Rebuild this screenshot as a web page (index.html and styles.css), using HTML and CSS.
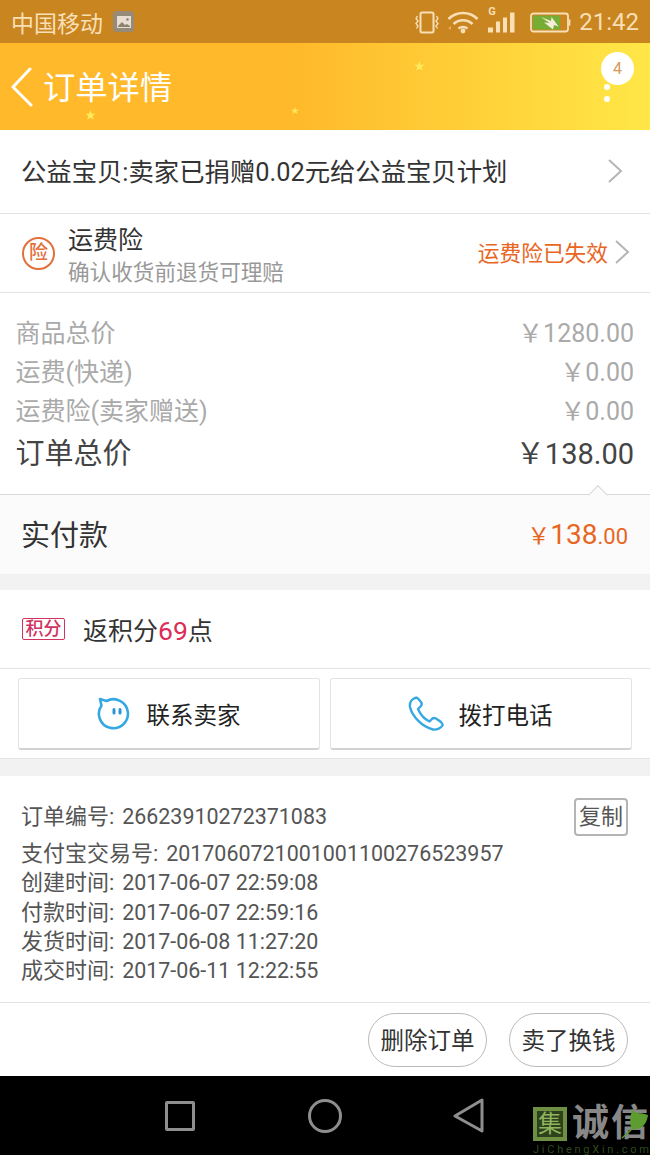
FILE: index.html
```html
<html>

<head>
	<title>订单详情</title>
	<meta name="viewport" content="width=device-width, initial-scale=1.0">
	<link rel="stylesheet" href="styles.css">
</head>

<body>
	<div class="statusbar">
		<div class="status-left">
			<span>中国移动</span>
			<span class="pic-note">
				<svg width="16" height="14" viewBox="0 0 16 14"><path d="M1 1h14v12H1z" fill="#e8dfd2"/><path d="M2 11l4-4 3 3 2-1 3 2v1H2z" fill="#8d8373"/><circle cx="11.500" cy="4.500" r="1.300" fill="#8d8373"/></svg>
			</span>
		</div>
		<div class="status-right">
			<svg class="vib" width="24" height="24" viewBox="0 0 24 24" fill="none" stroke="#f8dfb5" stroke-width="1.800"><rect x="5.500" y="2.500" width="13" height="20" rx="1.500" stroke-width="2"/><path d="M2.500 6L1 8.500 3 11l-2 2.500L3 16l-1.500 2.500M21.500 6L23 8.500 21 11l2 2.500-2 2.500 1.500 2.500" stroke-width="1.400"/></svg>
			<svg class="wifi" width="32" height="24" viewBox="0 0 32 24" fill="none" stroke="#f8dfb5" stroke-width="2.600"><path d="M1.500 9c8-8 21-8 29 0M6.500 14c5.500-5 13.500-5 19 0M11.500 18.500c2.500-2 6.500-2 9 0"/><circle cx="16" cy="21" r="2.400" fill="#f8dfb5" stroke="none"/><path d="M1 18l3-2v4z" fill="#e8a85a" stroke="none"/></svg>
			<span class="signal">
				<span class="g">G</span>
				<svg width="27" height="24" viewBox="0 0 27 24" fill="#f8dfb5"><path d="M0 17.500h5v5H0zM8 11.500h4v11H8zM15 7.500h4v15h-4zM22 2.500h4.500v20H22z"/></svg>
			</span>
			<svg class="battery" width="41" height="22" viewBox="0 0 41 22"><rect x="1" y="2.500" width="37" height="18" rx="2.500" fill="none" stroke="#f8dfb5" stroke-width="1.800"/><path d="M3 4.500h27v14H3z" fill="#76ad35"/><path d="M39.500 8.500v6" stroke="#f8dfb5" stroke-width="1.800"/><path d="M11 6l10 4 .5-4 7 9.500-4.500-1.500-1 4.500-9-7 5.500.5z" fill="#f6edd8"/></svg>
			<span class="clock">21:42</span>
		</div>
	</div>

	<div class="header">
		<svg class="back" width="24" height="40" viewBox="0 0 24 40" fill="none" stroke="#fff" stroke-width="3" stroke-linecap="round" stroke-linejoin="round"><path d="M20 2L3 20l18 18"/></svg>
		<h1>订单详情</h1>
		<span class="star star1">★</span>
		<span class="star star2">★</span>
		<span class="star star3">★</span>
		<div class="more">
			<span class="badge">4</span>
			<span class="dot dot-top"></span>
			<span class="dot"></span>
		</div>
	</div>

	<div class="row donate">
		<span>公益宝贝:卖家已捐赠0.02元给公益宝贝计划</span>
		<svg class="chev" width="16" height="26" viewBox="0 0 16 26" fill="none" stroke="#b5b5b5" stroke-width="2"><path d="M2 2l12 11L2 24"/></svg>
	</div>

	<div class="row insure">
		<div class="insure-left">
			<span class="insure-icon">险</span>
			<div class="insure-text">
				<div class="insure-title">运费险</div>
				<div class="insure-sub">确认收货前退货可理赔</div>
			</div>
		</div>
		<div class="insure-right">
			<span>运费险已失效</span>
			<svg class="chev" width="16" height="26" viewBox="0 0 16 26" fill="none" stroke="#b5b5b5" stroke-width="2"><path d="M2 2l12 11L2 24"/></svg>
		</div>
	</div>

	<div class="prices">
		<div class="price-row"><span>商品总价</span><span>￥1280.00</span></div>
		<div class="price-row"><span>运费(快递)</span><span>￥0.00</span></div>
		<div class="price-row"><span>运费险(卖家赠送)</span><span>￥0.00</span></div>
		<div class="price-row total"><span>订单总价</span><span>￥138.00</span></div>
	</div>

	<div class="paid">
		<span class="notch"></span>
		<span class="paid-label">实付款</span>
		<span class="paid-value"><small class="yen">￥</small>138<small>.00</small></span>
	</div>

	<div class="gap"></div>

	<div class="points">
		<span class="points-tag">积分</span>
		<span>返积分<em>69</em>点</span>
	</div>

	<div class="contact">
		<div class="contact-btn">
			<svg width="36" height="36" viewBox="0 0 36 36" fill="none" stroke="#35a8e4" stroke-width="2.600" stroke-linejoin="round"><path d="M10.500 5A14.500 14.500 0 1 1 5.500 9.500L4 3z"/><path d="M18 13.500v3.500M24 13.500v3.500" stroke="#2c95d4" stroke-linecap="round" stroke-width="3"/></svg>
			<span>联系卖家</span>
		</div>
		<div class="contact-btn">
			<svg width="36" height="36" viewBox="0 0 36 36" fill="none" stroke="#35a8e4" stroke-width="2.400" stroke-linejoin="round"><path d="M6 2.500C3 4 1.500 7 2 11c2 9 12 20 23 22.500 4 .5 8-1.500 9.500-4 .5-1.500-.5-2.500-1.500-3.500l-5-3.500c-2-1-3.500-.5-4.500 1l-2 2c-5.500-2.500-9.500-8-11.500-12.500l2.500-2.500c1.500-1.500 1.500-3 .5-4.500l-3-3.500C9 1.500 7.500 1.500 6 2.500z"/></svg>
			<span>拨打电话</span>
		</div>
	</div>

	<div class="gap gap-line"></div>

	<div class="details">
		<div class="copy-line">
			<span><span class="label">订单编号:</span> 26623910272371083</span>
			<span class="copy">复制</span>
		</div>
		<div class="detail-list">
			<div><span class="label">支付宝交易号:</span> 2017060721001001100276523957</div>
			<div><span class="label">创建时间:</span> 2017-06-07 22:59:08</div>
			<div><span class="label">付款时间:</span> 2017-06-07 22:59:16</div>
			<div><span class="label">发货时间:</span> 2017-06-08 11:27:20</div>
			<div><span class="label">成交时间:</span> 2017-06-11 12:22:55</div>
		</div>
	</div>

	<div class="actions">
		<span class="pill">删除订单</span>
		<span class="pill">卖了换钱</span>
	</div>

	<div class="navbar">
		<span class="nav-square"></span>
		<span class="nav-circle"></span>
		<svg class="nav-back" width="32" height="36" viewBox="0 0 32 36" fill="none" stroke="#8e8e8e" stroke-width="3" stroke-linejoin="round"><path d="M29 2v31L2 18z"/></svg>
		<div class="mark">
			<div class="mark-top">
				<span class="mark-box">集</span>
				<span class="mark-name">诚信</span>
			</div>
			<div class="mark-url">JiChengXin.com</div>
			<svg class="leaf" width="30" height="32" viewBox="0 0 30 32"><path d="M13 2c2 6 9 3 15 6-1 8-6 16-16 14-3-6-2-14 1-20z" fill="#5d9c2f"/><path d="M12 22L2 31" stroke="#5d9c2f" stroke-width="1.500"/></svg>
		</div>
	</div>
</body>

</html>
```

FILE: styles.css
```css
html,
body {
	margin: 0;
	padding: 0;
}

body {
	width: 650px;
	height: 1155px;
	overflow: hidden;
	background-color: #fff;
	color: #333;
	font-family: 'Roboto', 'Noto Sans CJK SC', sans-serif;
}

.statusbar {
	display: flex;
	align-items: center;
	justify-content: space-between;
	height: 43px;
	padding: 0 11px 0 11px;
	background-color: #c98520;
	color: #f8dfb5;
	font-size: 23px;
}

.status-left,
.status-right {
	display: flex;
	align-items: center;
}

.status-left {
	gap: 10px;
}

.pic-note {
	display: flex;
	align-items: center;
	justify-content: center;
	width: 21px;
	height: 21px;
	border-radius: 4px;
	background-color: #968a78;
}

.status-right {
	font-size: 24px;
}

.wifi {
	margin-left: 8px;
}

.signal {
	position: relative;
	display: flex;
	margin-left: 9px;
}

.signal .g {
	position: absolute;
	left: 0;
	top: -4px;
	font-size: 11px;
	font-weight: 700;
	line-height: 11px;
}

.battery {
	margin-left: 15px;
}

.clock {
	margin-left: 8px;
}

.header {
	position: relative;
	display: flex;
	align-items: center;
	height: 87px;
	background-image: linear-gradient(90deg, #ffb92a 0%, #ffb92a 45%, #ffe747 100%);
}

.back {
	margin-left: 10px;
}

.header h1 {
	margin: -3px 0 0 9px;
	color: #fff;
	font-size: 32.300px;
	font-weight: 400;
}

.star {
	position: absolute;
	color: #ffe95c;
	font-size: 11px;
	line-height: 11px;
}

.star1 {
	left: 85px;
	top: 67px;
}

.star2 {
	left: 291px;
	top: 62px;
	font-size: 8px;
}

.star3 {
	left: 414px;
	top: 18px;
}

.more {
	position: absolute;
	right: 16px;
	top: 9px;
	display: flex;
	flex-direction: column;
	width: 33px;
}

.badge {
	position: relative;
	width: 33px;
	height: 33px;
	border-radius: 50%;
	background-color: #fff;
	color: #d59a5a;
	font-size: 16px;
	line-height: 33px;
	text-align: center;
}

.dot {
	position: relative;
	width: 6px;
	height: 6px;
	margin-top: 6px;
	margin-left: 3px;
	border-radius: 50%;
	background-color: #fff;
}

.dot-top {
	margin-top: -1px;
}

.row {
	display: flex;
	align-items: center;
	justify-content: space-between;
	box-sizing: border-box;
	border-bottom: 1px solid #e3e3e3;
}

.donate {
	height: 84px;
	padding: 0 27px 0 21px;
	color: #333;
	font-size: 25.350px;
}

.donate > span {
	margin-bottom: 3px;
}

.donate .chev {
	margin-bottom: 2px;
}

.insure {
	height: 79px;
	padding: 0 20px 0 22px;
}

.insure-left {
	display: flex;
	align-items: center;
	gap: 13px;
}

.insure-text {
	padding-top: 4px;
}

.insure-icon {
	box-sizing: border-box;
	width: 33px;
	height: 33px;
	border: 2px solid #e2703a;
	border-radius: 50%;
	color: #e2703a;
	font-size: 19px;
	font-weight: 500;
	line-height: 28px;
	text-align: center;
}

.insure-title {
	color: #333;
	font-size: 25px;
	line-height: 36px;
}

.insure-sub {
	color: #999;
	font-size: 21.600px;
	line-height: 28px;
}

.insure-right {
	display: flex;
	align-items: center;
	gap: 6px;
	padding-bottom: 3px;
	color: #e8661f;
	font-size: 21.700px;
}

.prices {
	display: flex;
	flex-direction: column;
	box-sizing: border-box;
	height: 202px;
	padding: 21px 16px 0 15.500px;
	border-bottom: 1px solid #d9d9d9;
}

.price-row {
	display: flex;
	justify-content: space-between;
	height: 39px;
	color: #aaa;
	font-size: 25px;
	line-height: 39px;
}

.price-row.total {
	height: 46px;
	color: #444;
	font-size: 29px;
	line-height: 46px;
}

.paid {
	position: relative;
	display: flex;
	align-items: center;
	justify-content: space-between;
	box-sizing: border-box;
	height: 79px;
	padding: 0 22px 4px 21px;
	background-color: #fbfbfb;
}

.notch {
	position: absolute;
	right: 45px;
	top: -7px;
	width: 13px;
	height: 13px;
	background-color: #fbfbfb;
	border-left: 1px solid #d9d9d9;
	border-top: 1px solid #d9d9d9;
	transform: rotate(45deg);
}

.paid-label {
	color: #333;
	font-size: 29px;
}

.paid-value {
	margin-top: 3px;
	color: #e8661f;
	font-size: 28px;
}

.paid-value small {
	font-size: 22px;
}

.paid-value .yen {
	font-size: 23px;
}

.gap {
	height: 16px;
	background-color: #f2f2f2;
}

.gap-line {
	height: 17px;
	border-top: 1px solid #e3e3e3;
}

.points {
	display: flex;
	align-items: center;
	gap: 18px;
	box-sizing: border-box;
	height: 79px;
	padding: 0 22px;
	border-bottom: 1px solid #e3e3e3;
	color: #333;
	font-size: 25px;
}

.points em {
	color: #dc2c58;
	font-size: 26.500px;
	font-style: normal;
}

.points-tag {
	box-sizing: border-box;
	width: 43px;
	height: 22px;
	border: 1px solid #d0335f;
	border-radius: 2px;
	color: #d0335f;
	font-size: 18px;
	font-weight: 500;
	line-height: 19px;
	text-align: center;
}

.contact {
	display: flex;
	justify-content: space-between;
	height: 89px;
	box-sizing: border-box;
	padding: 9px 18px 0;
}

.contact-btn {
	display: flex;
	align-items: center;
	justify-content: center;
	gap: 15px;
	box-sizing: border-box;
	width: 302px;
	height: 72px;
	padding-right: 2px;
	border: 1px solid #e3e3e3;
	border-bottom: 2px solid #d2d2d2;
	border-radius: 3px;
	color: #222;
	font-size: 23.500px;
}

.details {
	box-sizing: border-box;
	height: 227px;
	padding: 18px 22px 0 21px;
	border-bottom: 1px solid #e3e3e3;
	color: #555;
	font-size: 21.450px;
}

.label {
	margin-right: 2.500px;
	font-size: 22px;
}

.copy-line {
	display: flex;
	align-items: center;
	justify-content: space-between;
	height: 40px;
}

.copy {
	box-sizing: border-box;
	width: 54px;
	height: 38px;
	margin-top: 5px;
	border: 2px solid #b4b4b4;
	border-radius: 4px;
	color: #555;
	font-size: 22px;
	line-height: 33px;
	text-align: center;
}

.detail-list {
	margin-top: 5px;
	line-height: 29.250px;
}

.actions {
	display: flex;
	justify-content: flex-end;
	align-items: center;
	gap: 22px;
	height: 73px;
	padding-right: 22px;
}

.pill {
	box-sizing: border-box;
	width: 119px;
	height: 54px;
	border: 1px solid #bbb;
	border-radius: 27px;
	color: #333;
	font-size: 23.500px;
	line-height: 54px;
	text-align: center;
}

.navbar {
	position: relative;
	display: flex;
	align-items: center;
	gap: 113px;
	height: 79px;
	padding-left: 165px;
	background-color: #000;
}

.nav-square {
	box-sizing: border-box;
	width: 30px;
	height: 30px;
	border: 3px solid #8e8e8e;
	border-radius: 2px;
}

.nav-circle {
	box-sizing: border-box;
	width: 34px;
	height: 34px;
	margin-right: -1px;
	border: 3px solid #8e8e8e;
	border-radius: 50%;
}

.nav-back {
	margin-left: -1px;
}

.mark {
	position: absolute;
	left: 533px;
	top: 31px;
	width: 117px;
}

.mark-top {
	display: flex;
	align-items: center;
	gap: 5px;
}

.mark-box {
	box-sizing: border-box;
	width: 35px;
	height: 34px;
	border: 4px solid #6f8f45;
	background-color: #2d421b;
	color: #8fb35f;
	font-size: 24px;
	line-height: 26px;
	text-align: center;
}

.mark-name {
	color: #888;
	font-size: 37px;
	font-weight: 700;
	letter-spacing: 2px;
	line-height: 34px;
	white-space: nowrap;
}

.mark-url {
	margin-top: 2px;
	color: #2e4a1e;
	font-size: 11px;
	letter-spacing: 2.750px;
	line-height: 14px;
	white-space: nowrap;
}

.leaf {
	position: absolute;
	left: 87px;
	top: 0;
}
```
